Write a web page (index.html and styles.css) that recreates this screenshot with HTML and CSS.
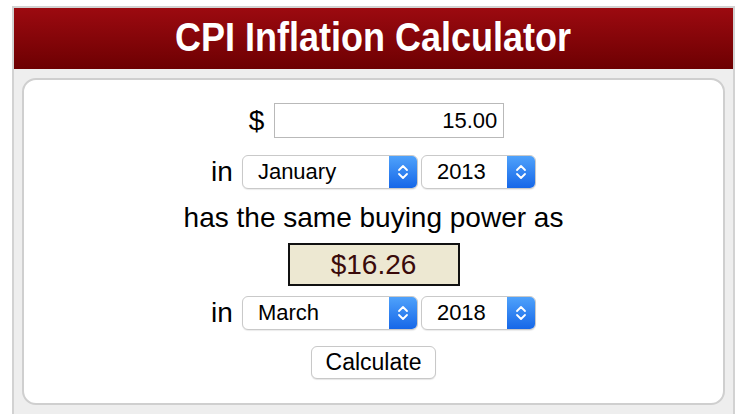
FILE: index.html
```html
<!DOCTYPE html>
<html lang="en">
<head>
<meta charset="utf-8">
<title>CPI Inflation Calculator</title>
<link rel="stylesheet" href="styles.css">
</head>
<body>
<div class="wrap">
  <header class="head"><h1 class="title">CPI Inflation Calculator</h1></header>
  <main class="panel">
    <div class="row row-amount">
      <span class="label">$</span>
      <input class="amount" type="text" value="15.00">
    </div>
    <div class="row row-sel">
      <span class="label">in</span>
      <div class="select month">
        <span class="sel-text">January</span>
        <span class="sel-arrow"><svg width="12" height="18" viewBox="0 0 12 18"><path d="M2 7 L6 3 L10 7 M2 11 L6 15 L10 11" fill="none" stroke="#fff" stroke-width="1.8" stroke-linecap="round" stroke-linejoin="round"/></svg></span>
      </div>
      <div class="select year">
        <span class="sel-text">2013</span>
        <span class="sel-arrow"><svg width="12" height="18" viewBox="0 0 12 18"><path d="M2 7 L6 3 L10 7 M2 11 L6 15 L10 11" fill="none" stroke="#fff" stroke-width="1.8" stroke-linecap="round" stroke-linejoin="round"/></svg></span>
      </div>
    </div>
    <p class="same">has the same buying power as</p>
    <div class="result">$16.26</div>
    <div class="row row-sel row-sel2">
      <span class="label">in</span>
      <div class="select month">
        <span class="sel-text">March</span>
        <span class="sel-arrow"><svg width="12" height="18" viewBox="0 0 12 18"><path d="M2 7 L6 3 L10 7 M2 11 L6 15 L10 11" fill="none" stroke="#fff" stroke-width="1.8" stroke-linecap="round" stroke-linejoin="round"/></svg></span>
      </div>
      <div class="select year">
        <span class="sel-text">2018</span>
        <span class="sel-arrow"><svg width="12" height="18" viewBox="0 0 12 18"><path d="M2 7 L6 3 L10 7 M2 11 L6 15 L10 11" fill="none" stroke="#fff" stroke-width="1.8" stroke-linecap="round" stroke-linejoin="round"/></svg></span>
      </div>
    </div>
    <div class="row row-btn">
      <button class="calc" type="button">Calculate</button>
    </div>
  </main>
</div>
</body>
</html>
```

FILE: styles.css
```css
html, body {
  margin: 0;
  padding: 0;
  background: #fff;
  height: 100%;
}
body {
  font-family: "Liberation Sans", Arial, Helvetica, sans-serif;
  color: #000;
  overflow: hidden;
}
.wrap {
  margin: 6px 11px 0 12px;
  border: 2px solid #d2d2d2;
  border-bottom: none;
  background: #eeeeee;
  height: 420px;
  box-sizing: border-box;
}
.head {
  height: 61px;
  background: linear-gradient(#9c0a10, #6d0002);
  display: flex;
  align-items: center;
  justify-content: center;
}
.title {
  margin: 0 0 4px 0;
  color: #fff;
  font-size: 40px;
  font-weight: bold;
  line-height: 44px;
  white-space: nowrap;
  transform: scaleX(0.9);
}
.panel {
  margin: 9px 8px 0 8px;
  height: 327px;
  box-sizing: border-box;
  background: #fff;
  border: 2px solid #cfcfcf;
  border-radius: 14px;
  padding-top: 23px;
  display: flex;
  flex-direction: column;
  align-items: center;
}
.row {
  display: flex;
  align-items: center;
  justify-content: center;
}
.label {
  font-size: 28px;
  line-height: 34px;
}
.row-amount {
  height: 35px;
  gap: 10px;
  padding-left: 6px;
}
.amount {
  width: 230px;
  height: 35px;
  box-sizing: border-box;
  border: 1px solid #b9b9b9;
  font-family: "Liberation Sans", Arial, sans-serif;
  font-size: 22px;
  text-align: right;
  padding: 0 6px 0 0;
  color: #000;
  outline: none;
}
.row-sel {
  margin-top: 17px;
  height: 34px;
  gap: 3px;
}
.row-sel .label {
  margin-right: 6px;
}
.select {
  display: flex;
  height: 34px;
  box-sizing: border-box;
  border: 1px solid #c9c9c9;
  border-radius: 6px;
  background: #fff;
  overflow: hidden;
  box-shadow: 0 1px 1px rgba(0,0,0,0.08);
}
.select.month { width: 176px; }
.select.year { width: 115px; }
.sel-text {
  flex: 1;
  font-size: 22px;
  line-height: 32px;
  padding-left: 15px;
}
.sel-arrow {
  width: 28px;
  background: linear-gradient(#4fa2fb, #1667e8);
  display: flex;
  align-items: center;
  justify-content: center;
}
.same {
  margin: 13px 0 0 0;
  font-size: 28px;
  line-height: 32px;
}
.result {
  margin-top: 9px;
  width: 172px;
  height: 43px;
  box-sizing: border-box;
  border: 2px solid #111;
  background: #ede8d2;
  color: #3a0a0a;
  font-size: 28px;
  line-height: 39px;
  text-align: center;
}
.row-sel2 {
  margin-top: 10px;
}
.row-btn {
  margin-top: 16px;
}
.calc {
  width: 125px;
  height: 33px;
  box-sizing: border-box;
  border: 1px solid #c8c8c8;
  border-radius: 6px;
  background: #fff;
  font-family: "Liberation Sans", Arial, sans-serif;
  font-size: 23px;
  color: #000;
  padding: 0;
  box-shadow: 0 1px 1px rgba(0,0,0,0.1);
}
```
